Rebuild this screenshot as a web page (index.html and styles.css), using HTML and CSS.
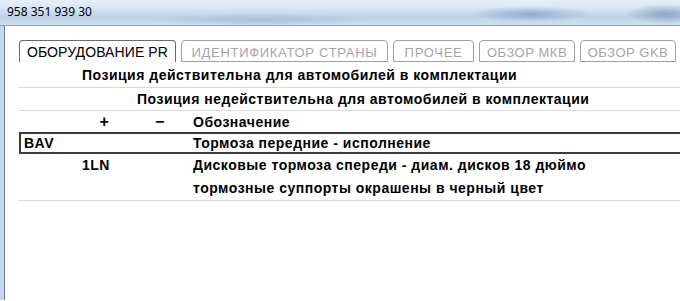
FILE: index.html
```html
<!DOCTYPE html>
<html>
<head>
<meta charset="utf-8">
<link rel="stylesheet" href="styles.css">
</head>
<body>
<div class="titlebar"><span class="title">958 351 939 30</span></div>
<div class="window">
  <div class="tabs">
    <div class="tab active t1">ОБОРУДОВАНИЕ PR</div>
    <div class="tab t2">ИДЕНТИФИКАТОР СТРАНЫ</div>
    <div class="tab t3">ПРОЧЕЕ</div>
    <div class="tab t4">ОБЗОР МКВ</div>
    <div class="tab t5">ОБЗОР GKB</div>
  </div>
  <div class="grid">
    <div class="row r1"><div class="span-plus">Позиция действительна для автомобилей в комплектации</div></div>
    <div class="row r2"><div class="span-minus">Позиция недействительна для автомобилей в комплектации</div></div>
    <div class="row r3">
      <div class="c0"></div>
      <div class="cp center">+</div>
      <div class="cm center">−</div>
      <div class="cd">Обозначение</div>
    </div>
    <div class="row family">
      <div class="c0">BAV</div>
      <div class="cp"></div>
      <div class="cm"></div>
      <div class="cd">Тормоза передние - исполнение</div>
    </div>
    <div class="row item">
      <div class="c0"></div>
      <div class="cp">1LN</div>
      <div class="cm"></div>
      <div class="cd">Дисковые тормоза спереди - диам. дисков 18 дюймо<br>тормозные суппорты окрашены в черный цвет</div>
    </div>
  </div>
</div>
</body>
</html>
```
FILE: styles.css
```css
html, body {
  margin: 0;
  padding: 0;
  background: #ffffff;
  overflow: hidden;
}
body {
  width: 680px;
  height: 301px;
  font-family: "Liberation Sans", Arial, sans-serif;
  color: #000;
}
.titlebar {
  height: 26px;
  border-bottom: 1px solid #8ea3b8;
  background:
    radial-gradient(ellipse 60px 8px at 530px 14px, rgba(90,120,160,0.45), rgba(90,120,160,0) 100%),
    radial-gradient(ellipse 40px 10px at 665px 14px, rgba(80,105,140,0.45), rgba(80,105,140,0) 100%),
    radial-gradient(ellipse 120px 6px at 260px 20px, rgba(110,140,175,0.3), rgba(110,140,175,0) 100%),
    linear-gradient(180deg, #e6eff8 0%, #d6e4f2 35%, #bdd2e8 65%, #cfdff0 100%);
  display: flex;
  align-items: center;
  box-sizing: border-box;
  padding-left: 7px;
}
.title {
  font-family: "Noto Sans", "Open Sans", sans-serif;
  font-size: 12px;
  color: #000;
  position: relative;
  top: -1px;
}
.window {
  height: 274px;
  border-left: 4px solid #c3d8ee;
  box-shadow: inset 1px 0 0 #6f7c8a;
  padding-left: 15px;
  padding-top: 14px;
  box-sizing: border-box;
}
.tabs {
  display: flex;
  gap: 5px;
  height: 22px;
}
.tab {
  flex: none;
  height: 22px;
  box-sizing: border-box;
  border: 1px solid #a0a0a0;
  border-radius: 4px 4px 0 0;
  text-align: center;
  font-size: 13px;
  letter-spacing: 0.7px;
  padding-top: 2px;
  line-height: 19px;
  color: #a4a4ae;
  background: #fff;
  white-space: nowrap;
}
.t1 { width: 157px; font-size: 14px; letter-spacing: 0.1px; }
.t2 { width: 207px; }
.t3 { width: 81px; }
.t4 { width: 96px; letter-spacing: 0.5px; }
.t5 { width: 96px; letter-spacing: 0.5px; }
.tab.active {
  color: #000;
  border-color: #6a6a6a;
  border-bottom: none;
}
.grid {
  font-weight: bold;
  font-size: 14px;
  letter-spacing: 0.5px;
}
.row {
  display: grid;
  grid-template-columns: 58px 55px 56px 1fr;
  border-bottom: 1px solid #d8d8d8;
  margin-right: -4px;
}
.row > div {
  padding-left: 5px;
  white-space: nowrap;
}
.row > .center {
  text-align: center;
  padding: 0;
  font-size: 16px;
}
.r1 { height: 25px; align-items: center; }
.r2 { height: 22px; align-items: center; }
.r3 { height: 21px; align-items: center; border-bottom: none; }
.span-plus { grid-column: 2 / 5; }
.span-minus { grid-column: 3 / 5; }
.family {
  height: 22px;
  box-sizing: border-box;
  border: 2px solid #3c3c3c;
  align-items: center;
}
.family > .c0 { padding-left: 3px; }
.family > .cd { padding-left: 3px; }
.item {
  line-height: 23px;
}
```
